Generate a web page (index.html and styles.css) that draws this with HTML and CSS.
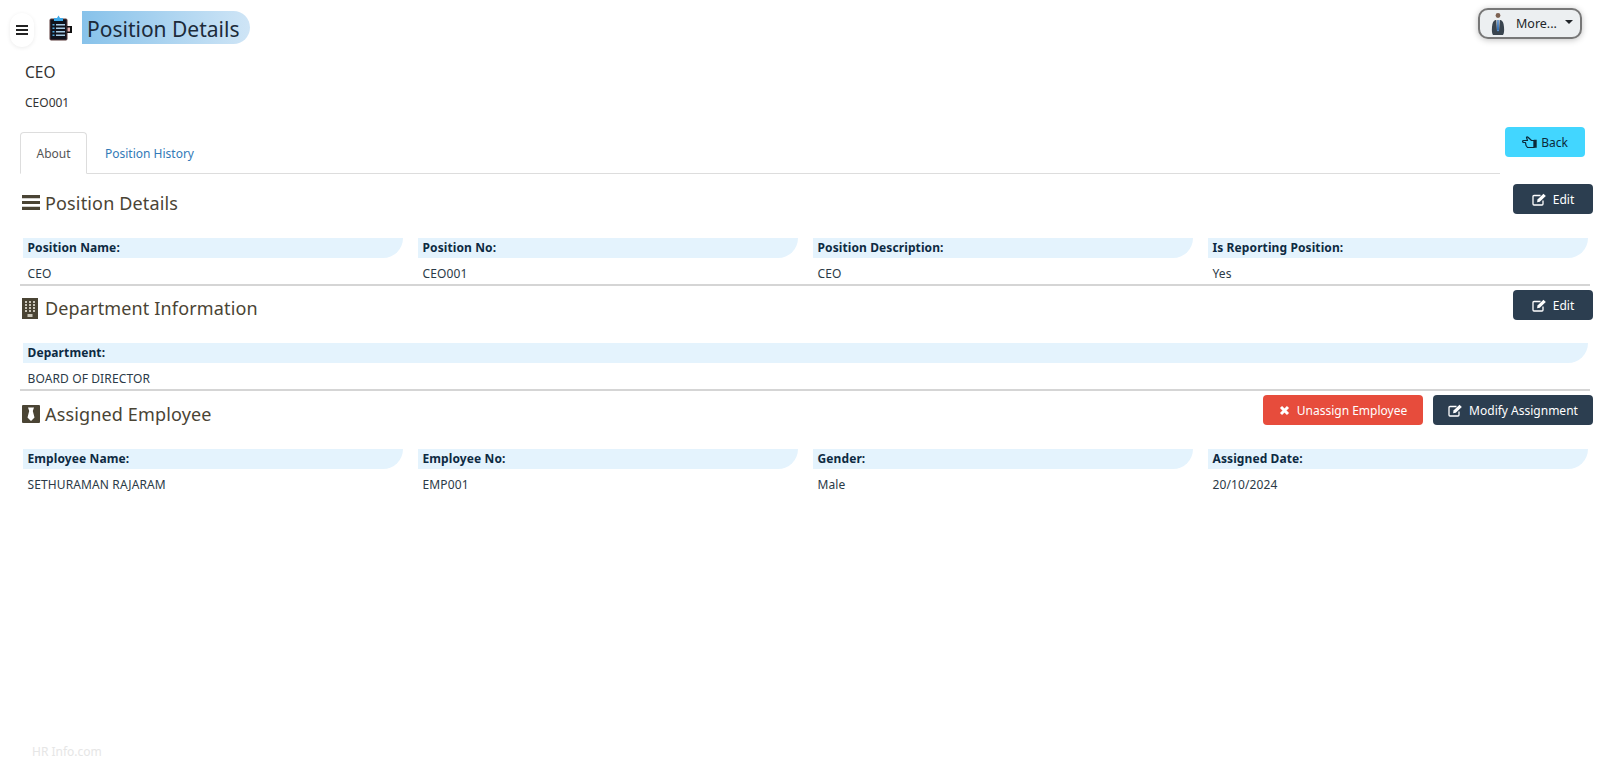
FILE: index.html
```html
<!DOCTYPE html>
<html lang="en">
<head>
<meta charset="utf-8">
<title>Position Details</title>
<link rel="stylesheet" href="styles.css">
</head>
<body>
<header class="topbar">
  <button class="toggler" aria-label="Menu">
    <svg width="12" height="10" viewBox="0 0 12 10"><path d="M0 0h12v2H0zM0 4h12v2H0zM0 8h12v2H0z" fill="#222"/></svg>
  </button>
  <svg class="page-icon" width="24" height="26" viewBox="0 0 24 26">
    <rect x="1" y="4" width="17" height="21" rx="1" fill="#10131c" stroke="#5a3b3b"/>
    <path d="M5 5V3h3l1.500-2.500L11 3h3v3H5z" fill="#3fa9e8"/>
    <path d="M7 9h9v1.500H7zM7 12.500h9V14H7zM7 16h9v1.500H7zM7 19.500h9V21H7z" fill="#a9cbe4"/>
    <path d="M3.500 9h2v1.500h-2zM3.500 12.500h2V14h-2zM3.500 16h2v1.500h-2zM3.500 19.500h2V21h-2z" fill="#4fa8de"/>
    <rect x="18" y="11" width="5" height="7" fill="#111"/>
    <rect x="18.500" y="12.500" width="2.500" height="4" fill="#e8b4b4"/>
  </svg>
  <h1 class="page-title">Position Details</h1>
  <button class="more">
    <svg width="16" height="24" viewBox="0 0 16 24">
      <circle cx="8" cy="3.500" r="2.400" fill="#7d6252"/>
      <path d="M3 23q-1.500-2-1-8 .3-6 3.500-7h5q3.200 1 3.500 7 .5 6-1 8z" fill="#39444e"/>
      <path d="M6.300 7.800h3.400L9 19H7z" fill="#e8eef2"/>
      <path d="M7.400 8h1.200l.4 10-1 2-1-2z" fill="#2d6cb5"/>
    </svg>
    <span>More...</span>
    <i class="caret"></i>
  </button>
</header>

<div class="identity">
  <div class="identity-name">CEO</div>
  <div class="identity-code">CEO001</div>
</div>

<div class="tabs-row">
  <nav class="tabs">
    <a class="tab active">About</a>
    <a class="tab">Position History</a>
  </nav>
  <button class="btn btn-back">
    <svg width="15" height="13" viewBox="0 0 15 13"><path d="M12 4.500H9.500L6 1.300Q5 .5 4.500 1.500L5.500 4.500H1.800Q.6 4.500.6 5.500t1.200 1H3.500L4 9.500l1.500 2H12z" fill="none" stroke="#0b2a3a" stroke-width="1.200" stroke-linejoin="round"/><path d="M11.800 3.800h2.900v8h-2.900z" fill="#0b2a3a"/></svg>
    Back
  </button>
</div>

<section class="section first">
  <div class="section-head">
    <h2 class="section-title">
      <svg class="sec-icon" width="18" height="15" viewBox="0 0 18 15"><path d="M0 0h18v3.200H0zM0 5.900h18v3.200H0zM0 11.800h18V15H0z" fill="#4a4434"/></svg>
      Position Details
    </h2>
    <button class="btn btn-dark">
      <svg class="edit-icon" width="15" height="13" viewBox="0 0 15 13"><path d="M11 7.500V11a1 1 0 0 1-1 1H2a1 1 0 0 1-1-1V3.500a1 1 0 0 1 1-1h6.500" fill="none" stroke="#fff" stroke-width="1.300"/><path d="M5.500 6.500 11.500.8l2.300 2.200-6 5.800-2.700.5z" fill="#fff"/></svg>
      Edit
    </button>
  </div>
  <div class="fields">
    <div class="field"><div class="label">Position Name:</div><div class="value">CEO</div></div>
    <div class="field"><div class="label">Position No:</div><div class="value">CEO001</div></div>
    <div class="field"><div class="label">Position Description:</div><div class="value">CEO</div></div>
    <div class="field"><div class="label">Is Reporting Position:</div><div class="value">Yes</div></div>
  </div>
</section>

<section class="section second">
  <div class="section-head">
    <h2 class="section-title">
      <svg class="sec-icon" width="18" height="21" viewBox="0 0 18 21"><rect width="16" height="21" fill="#4a4434"/><path d="M3 3h2v2H3zM7 3h2v2H7zM11 3h2v2h-2zM3 6h2v2H3zM7 6h2v2H7zM11 6h2v2h-2zM3 9h2v2H3zM7 9h2v2H7zM11 9h2v2h-2zM3 12h2v2H3zM7 12h2v2H7zM11 12h2v2h-2zM5.500 16h5v3h-5z" fill="#c9c5b8"/></svg>
      Department Information
    </h2>
    <button class="btn btn-dark">
      <svg class="edit-icon" width="15" height="13" viewBox="0 0 15 13"><path d="M11 7.500V11a1 1 0 0 1-1 1H2a1 1 0 0 1-1-1V3.500a1 1 0 0 1 1-1h6.500" fill="none" stroke="#fff" stroke-width="1.300"/><path d="M5.500 6.500 11.500.8l2.300 2.200-6 5.800-2.700.5z" fill="#fff"/></svg>
      Edit
    </button>
  </div>
  <div class="fields">
    <div class="field wide"><div class="label">Department:</div><div class="value">BOARD OF DIRECTOR</div></div>
  </div>
</section>

<section class="section last">
  <div class="section-head">
    <h2 class="section-title">
      <svg class="sec-icon" width="18" height="18" viewBox="0 0 18 18"><rect width="18" height="18" rx="1" fill="#4a4434"/><path d="M6 2.500h6L10.800 6l1.700 6.500L9 16l-3.500-3.500L7.200 6z" fill="#fff"/></svg>
      Assigned Employee
    </h2>
    <div class="actions">
      <button class="btn btn-red">
        <svg width="11" height="11" viewBox="0 0 11 11"><path d="M2 2l7 7M9 2l-7 7" stroke="#fff" stroke-width="3"/></svg>
        Unassign Employee
      </button>
      <button class="btn btn-dark">
        <svg class="edit-icon" width="15" height="13" viewBox="0 0 15 13"><path d="M11 7.500V11a1 1 0 0 1-1 1H2a1 1 0 0 1-1-1V3.500a1 1 0 0 1 1-1h6.500" fill="none" stroke="#fff" stroke-width="1.300"/><path d="M5.500 6.500 11.500.8l2.300 2.200-6 5.800-2.700.5z" fill="#fff"/></svg>
        Modify Assignment
      </button>
    </div>
  </div>
  <div class="fields">
    <div class="field"><div class="label">Employee Name:</div><div class="value">SETHURAMAN RAJARAM</div></div>
    <div class="field"><div class="label">Employee No:</div><div class="value">EMP001</div></div>
    <div class="field"><div class="label">Gender:</div><div class="value">Male</div></div>
    <div class="field"><div class="label">Assigned Date:</div><div class="value">20/10/2024</div></div>
  </div>
</section>

<footer class="footer">HR Info.com</footer>
</body>
</html>
```

FILE: styles.css
```css
* { box-sizing: border-box; }
html, body { height: 100%; }
body {
  margin: 0;
  min-height: 775px;
  display: flex;
  flex-direction: column;
  background: #fff;
  color: #212529;
  font-family: "Noto Sans", "Open Sans", sans-serif;
  font-size: 12px;
  overflow: hidden;
}
button { font-family: inherit; cursor: pointer; }

.topbar {
  display: flex;
  align-items: center;
  height: 54px;
  padding: 0 10px;
  flex: none;
}
.toggler {
  width: 24px;
  height: 34px;
  margin-top: 6px;
  padding: 0;
  border: 0;
  border-radius: 12px;
  background: #fff;
  box-shadow: 0 1px 4px rgba(0,0,0,.08);
  display: flex;
  align-items: center;
  justify-content: center;
}
.page-icon { margin: 2px 9px 0 15px; flex: none; }
.page-title {
  margin: 0;
  width: 168px;
  height: 33px;
  padding-left: 5px;
  font-size: 21px;
  font-weight: 400;
  line-height: 36px;
  color: #1c2b3a;
  white-space: nowrap;
  background: linear-gradient(90deg, #87c2ea, #cfe5f6);
  border-radius: 0 17px 17px 0;
}
.more {
  margin-left: auto;
  margin-right: 8px;
  margin-top: -7px;
  width: 104px;
  height: 31px;
  display: flex;
  align-items: center;
  padding: 0 0 0 10px;
  border: 2px solid #777;
  border-radius: 10px;
  background: #eceff1;
  box-shadow: 0 1px 6px rgba(0,0,0,.25);
  color: #212529;
  font-size: 12.500px;
}
.more span { margin-left: 10px; }
.caret {
  margin-left: 8px;
  margin-top: -4px;
  border-top: 4px solid #212529;
  border-left: 4px solid transparent;
  border-right: 4px solid transparent;
}

.identity { padding-left: 25px; flex: none; height: 73px; }
.identity-name { font-size: 15.500px; line-height: 20px; margin-top: 8px; color: #333; }
.identity-code { font-size: 12px; line-height: 16px; margin-top: 13px; color: #333; }

.tabs-row {
  display: flex;
  align-items: flex-start;
  height: 47px;
  padding-left: 20px;
  flex: none;
}
.tabs {
  display: flex;
  width: 1480px;
  height: 47px;
  padding-top: 5px;
  border-bottom: 1px solid #ddd;
}
.tab {
  display: block;
  height: 42px;
  padding: 0 17px;
  line-height: 41px;
  color: #337ab7;
  font-size: 12px;
  border: 1px solid transparent;
}
.tab.active {
  width: 67px;
  padding: 0;
  text-align: center;
  color: #555;
  background: #fff;
  border-color: #ddd #ddd #fff;
  border-radius: 4px 4px 0 0;
}
.btn {
  height: 30px;
  border: 0;
  border-radius: 4px;
  display: inline-flex;
  align-items: center;
  justify-content: center;
  font-size: 12px;
  padding: 0;
}
.btn svg { flex: none; margin-right: 4px; }
.btn-back {
  width: 80px;
  margin-left: 5px;
  background: #42d6ff;
  color: #0b2a3a;
}
.btn-dark {
  width: 80px;
  background: #2c3e50;
  color: #fff;
}
.btn-dark .edit-icon { margin-right: 6px; }
.btn-red {
  width: 160px;
  background: #e74c3c;
  color: #fff;
}
.btn-red svg { margin-right: 7px; }

.section {
  margin: 0 10px 0 20px;
  flex: none;
  border-bottom: 2px solid #d5d5d5;
}
.section.first { height: 112px; padding-top: 10px; }
.section.second { height: 105px; padding-top: 4px; }
.section.last { padding-top: 4px; border-bottom: 0; }
.section-head {
  display: flex;
  justify-content: space-between;
  align-items: flex-start;
  height: 30px;
  margin-right: -3px;
}
.section-title {
  display: flex;
  align-items: center;
  gap: 5px;
  margin: 0;
  height: 30px;
  padding-left: 2px;
  padding-top: 8px;
  font-size: 18px;
  font-weight: 400;
  color: #4a4434;
  letter-spacing: .15px;
}
.first .section-title { padding-top: 7px; }
.second .section-title { padding-top: 6px; }
.sec-icon { flex: none; }
.actions { display: flex; gap: 10px; }
.actions .btn-dark { width: 160px; }

.fields {
  display: grid;
  grid-template-columns: repeat(4, 1fr);
  column-gap: 15px;
  margin: 24px 2px 0 3px;
}
.second .fields { margin-top: 23px; }
.field.wide { grid-column: 1 / -1; }
.label {
  height: 20px;
  padding-left: 4.500px;
  line-height: 20px;
  font-weight: 700;
  letter-spacing: .1px;
  color: #0d2a42;
  background: #e4f3fd;
  border-radius: 0 0 20px 0;
}
.value {
  padding-left: 4.500px;
  margin-top: 7px;
  line-height: 17px;
  letter-spacing: .12px;
  color: #2b3a47;
}

.footer {
  margin-top: auto;
  padding: 0 0 15px 32px;
  color: #e6e6e6;
  font-size: 12px;
  line-height: 16px;
}
```
